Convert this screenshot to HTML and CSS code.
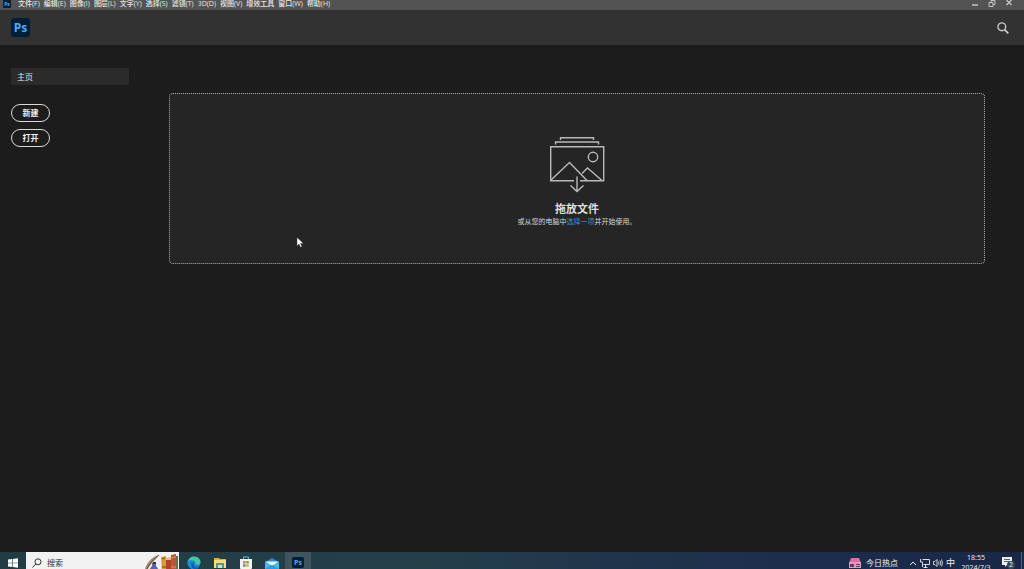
FILE: index.html
```html
<!DOCTYPE html>
<html lang="zh-CN">
<head>
<meta charset="utf-8">
<title>Photoshop</title>
<link rel="stylesheet" href="styles.css">
</head>
<body>
<header class="menubar">
  <span class="ps ps-small">Ps</span>
  <nav class="menus">
    <button>文件(F)</button><button>编辑(E)</button><button>图像(I)</button><button>图层(L)</button><button>文字(Y)</button><button>选择(S)</button><button>滤镜(T)</button><button>3D(D)</button><button>视图(V)</button><button>增效工具</button><button>窗口(W)</button><button>帮助(H)</button>
  </nav>
  <div class="window-controls">
    <button aria-label="最小化"><svg width="8" height="8" viewBox="0 0 8 8"><path d="M1 5h6" stroke="#ccc" stroke-width="1.4"/></svg></button>
    <button aria-label="还原"><svg width="8" height="8" viewBox="0 0 8 8" fill="none" stroke="#c4c4c4"><path d="M3 2.5V.5h4v4H5M1 2.500h4v4H1z"/></svg></button>
    <button aria-label="关闭"><svg width="8" height="8" viewBox="0 0 8 8"><path d="M1.500 0l5 5M6.500 0l-5 5" stroke="#ccc" stroke-width="1.200"/></svg></button>
  </div>
</header>
<div class="topbar">
  <span class="ps ps-large">Ps</span>
  <button class="search-button" aria-label="搜索"><svg width="12" height="12" viewBox="0 0 12 12" fill="none" stroke="#c8c8c8"><circle cx="4.800" cy="4.800" r="3.900" stroke-width="1.400"/><path d="M7.600 7.600L11.300 11.300" stroke-width="1.700"/></svg></button>
</div>
<div class="workspace">
  <aside class="sidebar">
    <a class="home" href="#">主页</a>
    <button class="pill">新建</button>
    <button class="pill">打开</button>
  </aside>
  <main class="content">
    <section class="dropzone">
      <svg width="56" height="58" viewBox="0 0 56 58" fill="none" stroke="#b9b9b9" stroke-width="1.400">
        <path d="M11.500 4V1.700h33V4M6.500 8.500V6h43v2.500M25 44.700H1.700V10.700h53v34H31"/>
        <circle cx="44" cy="21" r="4.700"/>
        <path d="M2 44L20.500 26.500 38 44.500M33 37.500l5.500-5.500 14.500 12.500M28 40.500v14.500M21.500 49.500l6.500 6 6.500-6"/>
      </svg>
      <h1>拖放文件</h1>
      <p>或从您的电脑中<a href="#">选择一项</a>并开始使用。</p>
    </section>
  </main>
</div>
<footer class="taskbar">
  <button class="start" aria-label="开始"><svg width="10" height="10" viewBox="0 0 10 10" fill="#fff"><path d="M0 1.600L4.200 1v3.700H0zM4.800.900L10 .200v4.500H4.800zM0 5.300h4.200V9L0 8.400zM4.800 5.300H10v4.500L4.800 9.100z"/></svg></button>
  <label class="search">
    <svg width="10" height="10" viewBox="0 0 10 10" fill="none" stroke="#333"><circle cx="6" cy="3.800" r="3"/><path d="M3.800 6L.500 9.500"/></svg>
    <input type="text" placeholder="搜索" aria-label="搜索">
    <svg class="books" width="34" height="20" viewBox="0 0 34 20">
      <path d="M0 20C2 9 8 4 15 2C12 7 8 9 5 14L2 20z" fill="#a98e77"/>
      <path d="M1 20Q5 9 15 2" stroke="#5b4739" fill="none"/>
      <path d="M3 20c1-4 3-6 5-6" stroke="#f0e8dd" fill="none"/>
      <path d="M8 10h4v3q3 3 3 7H5q0-4 3-7z" fill="#5966a4"/>
      <path d="M9 9h3v2H9z" fill="#30395f"/>
      <path d="M11 17h5v3h-5z" fill="#302d4d"/>
      <path d="M17 4l5-1v17h-4z" fill="#d59b34"/>
      <path d="M18 6l3-1M18 14h4" stroke="#714d27"/>
      <path d="M22 6h5v14h-5z" fill="#b83f29"/>
      <path d="M22 5l5-1v3h-5z" fill="#e5bb7c"/>
      <path d="M27 2l5-1v19h-5z" fill="#b9583c"/>
      <path d="M27 5l5-1M27 14h5" stroke="#d99a68"/>
      <path d="M32 3h2v17h-2z" fill="#68704b"/>
    </svg>
  </label>
  <nav class="apps">
    <button aria-label="Edge"><svg width="14" height="14" viewBox="0 0 14 14"><circle cx="7" cy="7" r="6.500" fill="#1682d4"/><path d="M.6 6C1.500 2.500 4 .5 7 .5c4 0 6.500 3 6.500 5.500 0 3-4.500 3.500-5.500 2 1-1.500 0-3.500-2.500-3.500S1 5.500.6 7z" fill="#42c89d"/><path d="M.5 6.500C2 3.500 7 3.500 7 7c-1.500 2 0 5 4.500 4.500C8 14.500.5 13 .5 6.500z" fill="#168fda"/><path d="M5 6.500c-2 3 0 6.500 3 6.900 2-.2 3-1 4-2.200-4 1-6-1-5-4z" fill="#155ba9"/></svg></button>
    <button aria-label="文件资源管理器"><svg width="12" height="12" viewBox="0 0 12 12"><path d="M0 1h5l1 1h6v9H0z" fill="#e4ad32"/><path d="M0 3h12v8H0z" fill="#ffdc78"/><path d="M2 6h8v5H8V8H4v3H2z" fill="#4b93bd"/></svg></button>
    <button aria-label="应用商店"><svg width="14" height="14" viewBox="0 0 14 14"><path d="M4.500 4V1h5v3" fill="none" stroke="#55bce9"/><path d="M1 3h12v9q0 1-1 1H2q-1 0-1-1z" fill="#f5f5f0"/><path d="M4 5h2.600v2.600H4z" fill="#e67748"/><path d="M7.200 5h2.600v2.600H7.200z" fill="#7cac48"/><path d="M4 8.200h2.600v2.600H4z" fill="#4b99c7"/><path d="M7.200 8.200h2.600v2.600H7.200z" fill="#ddb444"/></svg></button>
    <button aria-label="邮件"><svg width="14" height="14" viewBox="0 0 14 14"><path d="M0 6l7-4 7 4v7H0z" fill="#1977bd"/><path d="M1.500 5.500L7 2.500l5.500 3V9h-11z" fill="#2a8fd6"/><path d="M0 5.500h14L7 10z" fill="#e8f7ff"/><path d="M0 6l7 4.500L14 6v7H0z" fill="#47b9f1"/><path d="M0 13l7-4 7 4z" fill="#2f9ae2"/></svg></button>
    <button class="active" aria-label="Photoshop"><span class="ps ps-task">Ps</span></button>
  </nav>
  <div class="tray">
    <button class="news"><svg width="12" height="12" viewBox="0 0 12 12"><path d="M2 1h8l2 5H0z" fill="#e86aa7"/><path d="M0 5h12v6H0z" fill="#d8a1b7"/><path d="M1 7h4v3H1zM7 7h4v1H7zM7 9h4v1H7z" fill="#653b5d"/></svg>今日热点</button>
    <button aria-label="显示隐藏的图标"><svg width="8" height="8" viewBox="0 0 8 8"><path d="M1 6l3-3 3 3" fill="none" stroke="#eee"/></svg></button>
    <button aria-label="网络"><svg width="10" height="10" viewBox="0 0 10 10" fill="none" stroke="#ddd"><path d="M2.500 1.500h7v5h-6M5.500 6.500v3M3.500 9.500h4M.500 1v3h2v5"/></svg></button>
    <button aria-label="音量"><svg width="10" height="10" viewBox="0 0 10 10" fill="none" stroke="#ddd" stroke-width=".9"><path d="M.5 3.500h1.500l2-2v7l-2-2H.5zM5.500 3.500q1 1.500 0 3M7 2.500q1.600 2.500 0 5M8.500 1.500q2 3.500 0 7"/></svg></button>
    <button class="ime">中</button>
    <time class="clock" datetime="2024-07-03T18:55">18:55<br>2024/7/3</time>
    <button class="notice" aria-label="2 条通知"><svg width="14" height="12" viewBox="0 0 14 12"><path d="M1 0h10v8H6l-2 2V8H1z" fill="#eee"/><path d="M3 2.500h6M3 4.500h6" stroke="#53627d"/></svg><span class="badge">2</span></button>
    <span class="desktop-edge"></span>
  </div>
</footer>
<svg class="cursor" width="8" height="12" viewBox="0 0 8 12"><path d="M1 .500v8.500l2-2 1.500 3.300 1.400-.7L4.500 6.400h3z" fill="#fff" stroke="#333" stroke-width=".4"/></svg>
</body>
</html>
```
FILE: styles.css
```css
* { box-sizing: border-box; }
body {
  margin: 0;
  height: 100vh;
  display: flex;
  flex-direction: column;
  overflow: hidden;
  background: #1c1c1c;
  color: #dedede;
  font-family: "Open Sans", "Noto Sans CJK SC", sans-serif;
  font-size: 7px;
}
button {
  margin: 0;
  padding: 0;
  border: 0;
  background: none;
  color: inherit;
  font: inherit;
  white-space: nowrap;
}
svg { display: block; flex-shrink: 0; }
a { text-decoration: none; }
.ps {
  display: flex;
  align-items: center;
  justify-content: center;
  background: #001e36;
  color: #4eabf8;
  font-weight: 700;
}
.ps-small { width: 8px; height: 8px; font-size: 5px; border-radius: 1px; }
.ps-large { width: 19px; height: 19px; font-size: 12px; border-radius: 3px; }
.ps-task { width: 12px; height: 11px; font-size: 7px; border-radius: 2px; }
.menubar {
  display: flex;
  align-items: flex-start;
  flex-shrink: 0;
  height: 10px;
  padding-left: 3px;
  background: #535353;
  overflow: hidden;
}
.menus { display: flex; gap: 4px; margin-left: 7px; line-height: 8px; font-weight: 500; color: #e8e8e8; }
.window-controls { display: flex; gap: 9px; margin-left: auto; padding-right: 11px; }
.topbar {
  display: flex;
  align-items: center;
  justify-content: space-between;
  flex-shrink: 0;
  height: 35px;
  padding: 0 15px 0 11px;
  background: #323232;
}
.workspace { display: flex; flex: 1; min-height: 0; }
.sidebar {
  display: flex;
  flex-direction: column;
  align-items: flex-start;
  gap: 7px;
  width: 129px;
  padding: 23px 0 0 11px;
}
.home {
  width: 100%;
  margin-bottom: 12px;
  padding-left: 6px;
  background: #2b2b2b;
  color: #e4e4e4;
  line-height: 17px;
  font-size: 8px;
}
.pill {
  width: 39px;
  height: 18px;
  border: 1px solid #d8d8d8;
  border-radius: 9px;
  color: #f0f0f0;
  font-size: 8px;
  line-height: 14px;
  font-weight: 700;
}
.content { flex: 1; padding: 48px 39px 0 40px; }
.dropzone {
  display: flex;
  flex-direction: column;
  align-items: center;
  padding: 42px 0 36px;
  border: 1px dotted #aaa;
  border-radius: 4px;
  background: #252525;
}
.dropzone h1 { margin: 7px 0 0; font-size: 11px; line-height: 16px; font-weight: 700; }
.dropzone p { margin: 0; font-size: 7px; line-height: 10px; color: #d8d8d8; }
.dropzone a { color: #3b8ddb; }
.taskbar {
  display: flex;
  flex-shrink: 0;
  height: 17px;
  overflow: hidden;
  background: linear-gradient(90deg, #213c42, #243f4a 40%, #1d2e4d 75%, #1a2747);
  color: #f2f2f2;
}
.taskbar > * { height: 21px; }
.start { width: 26px; display: flex; align-items: center; justify-content: center; }
.search {
  display: flex;
  align-items: center;
  width: 153px;
  padding-left: 6px;
  background: #f2f2f2;
}
.search input {
  flex: 1;
  min-width: 0;
  margin-left: 5px;
  padding: 0;
  border: 0;
  outline: 0;
  background: none;
  font: inherit;
  font-size: 8px;
}
.search input::placeholder { color: #333; opacity: 1; }
.books { margin-right: 1px; }
.apps { display: flex; margin-left: 2px; }
.apps button { display: flex; align-items: center; justify-content: center; width: 26px; }
.apps .active { background: #40545e; }
.tray { display: flex; align-items: center; margin-left: auto; gap: 3px; }
.news { display: flex; align-items: center; gap: 5px; margin-right: 8px; font-size: 8px; }
.ime { font-size: 9px; }
.clock { width: 34px; margin-left: 1px; text-align: center; line-height: 10px; }
.notice { position: relative; margin: 0 3px 0 5px; }
.badge {
  position: absolute;
  left: 6px;
  top: 4px;
  width: 8px;
  height: 8px;
  border-radius: 50%;
  background: #39465d;
  font-size: 7px;
  line-height: 8px;
}
.desktop-edge { width: 3px; height: 21px; border-left: 1px solid #566079; }
.cursor { position: absolute; left: 296px; top: 237px; }
```
